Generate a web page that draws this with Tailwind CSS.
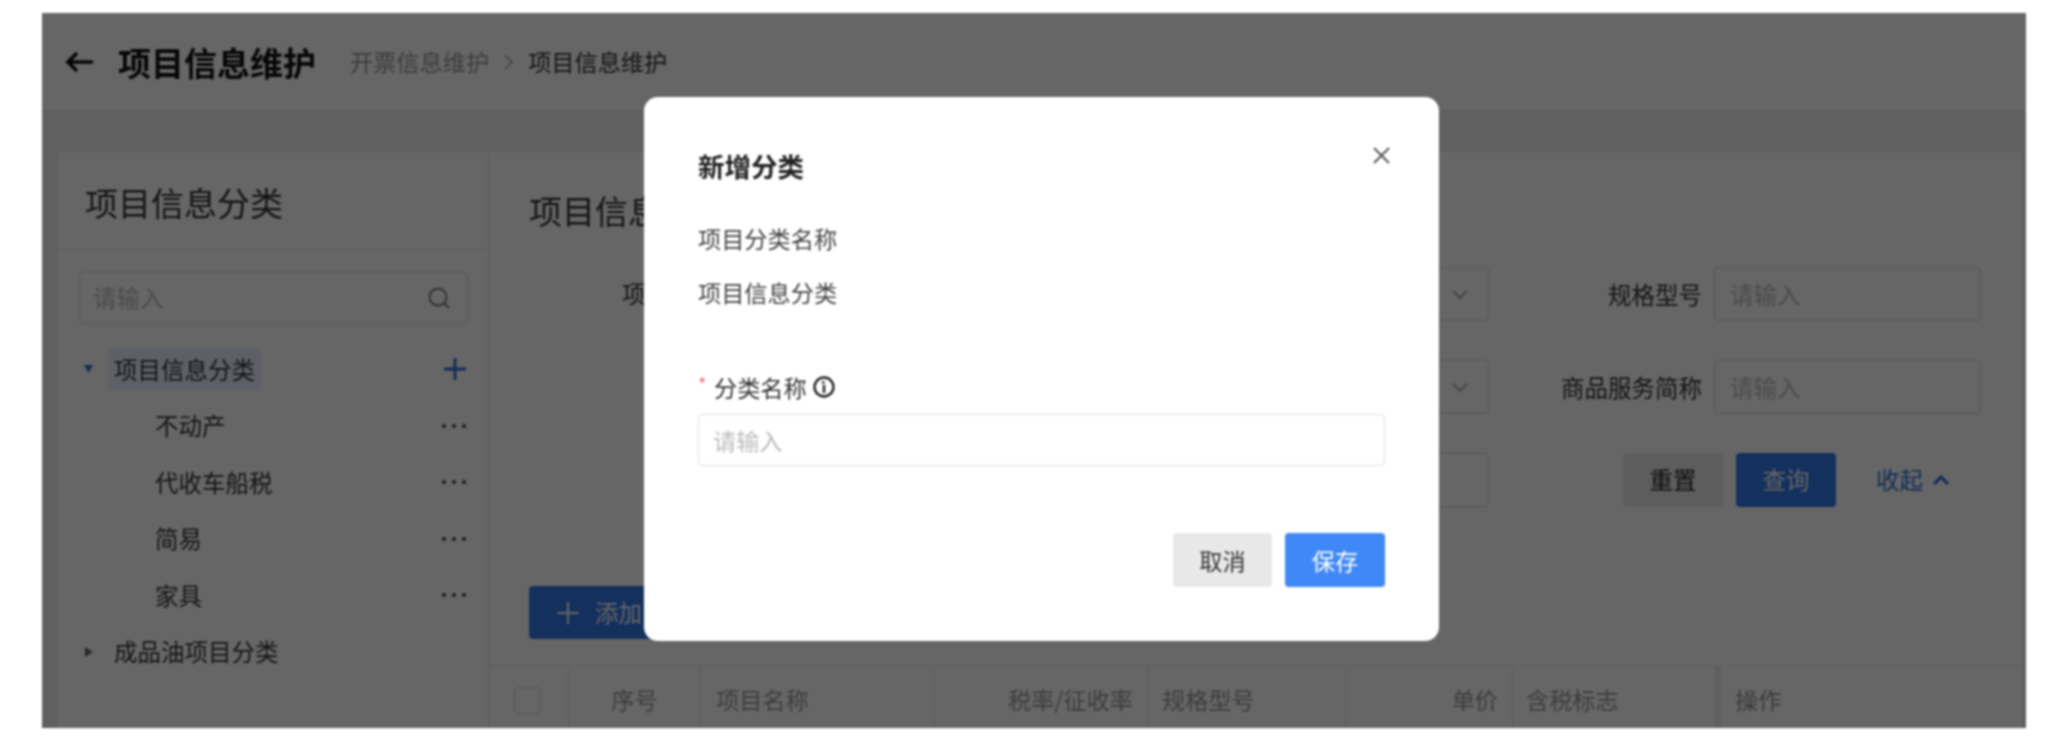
<!DOCTYPE html>
<html lang="zh-CN">

<head>
    <meta charset="UTF-8">
    <title>项目信息维护</title>
    <script src="https://cdn.jsdelivr.net/npm/@tailwindcss/browser@4"></script>
</head>

<body class="bg-white h-[745px] overflow-hidden font-['Noto_Sans_CJK_SC','Liberation_Sans',sans-serif]">

    <div class="relative ml-[42px] mt-[13px] w-[1984px] h-[715px] overflow-hidden bg-[#f0f0f0] flex flex-col blur-[0.8px]">

        <!-- page header -->
        <div class="h-[97px] flex-none bg-white flex items-center pl-[23px]">
            <svg class="w-[28px] h-[24px] text-[#111]" viewBox="0 0 28 24" fill="none" stroke="currentColor" stroke-width="3.6">
                <path d="M28 12H3M12 3l-9 9 9 9" />
            </svg>
            <span class="ml-[25px] text-[33px] leading-[46px] font-bold text-[#111]">项目信息维护</span>
            <span class="ml-[34px] text-[23.2px] text-[#999]">开票信息维护</span>
            <svg class="mx-[15px] w-[9px] h-[16px] text-[#999]" viewBox="0 0 9 16" fill="none" stroke="currentColor" stroke-width="1.3">
                <path d="M1 1l7 7-7 7" />
            </svg>
            <span class="text-[23.2px] text-[#333]">项目信息维护</span>
        </div>

        <!-- content -->
        <div class="flex-1 flex gap-[2px] pt-[42px] pl-[16px] pr-[4px] min-h-0">

            <!-- category tree -->
            <div class="w-[430px] flex-none bg-white">
                <div class="h-[98px] pl-[27px] pt-[27px] border-b border-[#f0f0f0] text-[33px] leading-[46px] text-[#333]">项目信息分类</div>
                <div class="mt-[22px] ml-[21px] w-[389px] h-[52px] border border-[#ddd] rounded-[4px] flex items-center pl-[13px] pr-[16px]">
                    <input class="flex-1 min-w-0 text-[23.5px] outline-none placeholder:text-[#bbb]" placeholder="请输入">
                    <svg class="w-[24px] h-[24px] text-[#777]" viewBox="0 0 24 24" fill="none" stroke="currentColor" stroke-width="1.8">
                        <circle cx="11" cy="11" r="8.5" />
                        <path d="M17 17l5 5" />
                    </svg>
                </div>
                <div class="mt-[17px] text-[23.5px] text-[#333]">
                    <div class="h-[56.5px] flex items-center pl-[26px] pr-[22px]">
                        <svg class="w-[9px] h-[8px] text-[#2f6fdc]" viewBox="0 0 9 8" fill="currentColor"><path d="M0 0h9L4.5 8z" /></svg>
                        <span class="ml-[15px] h-[42px] px-[6px] flex items-center rounded-[4px] bg-[#e9f1fe]">项目信息分类</span>
                        <svg class="ml-auto w-[22px] h-[22px] text-[#2f6fdc]" viewBox="0 0 22 22" fill="none" stroke="currentColor" stroke-width="2.8">
                            <path d="M11 0v22M0 11h22" />
                        </svg>
                    </div>
                    <div class="h-[56.5px] flex items-center pl-[97px] pr-[22px]">不动产<span class="ml-auto flex gap-[6px]"><i class="w-[4px] h-[4px] rounded-full bg-[#444]"></i><i class="w-[4px] h-[4px] rounded-full bg-[#444]"></i><i class="w-[4px] h-[4px] rounded-full bg-[#444]"></i></span></div>
                    <div class="h-[56.5px] flex items-center pl-[97px] pr-[22px]">代收车船税<span class="ml-auto flex gap-[6px]"><i class="w-[4px] h-[4px] rounded-full bg-[#444]"></i><i class="w-[4px] h-[4px] rounded-full bg-[#444]"></i><i class="w-[4px] h-[4px] rounded-full bg-[#444]"></i></span></div>
                    <div class="h-[56.5px] flex items-center pl-[97px] pr-[22px]">简易<span class="ml-auto flex gap-[6px]"><i class="w-[4px] h-[4px] rounded-full bg-[#444]"></i><i class="w-[4px] h-[4px] rounded-full bg-[#444]"></i><i class="w-[4px] h-[4px] rounded-full bg-[#444]"></i></span></div>
                    <div class="h-[56.5px] flex items-center pl-[97px] pr-[22px]">家具<span class="ml-auto flex gap-[6px]"><i class="w-[4px] h-[4px] rounded-full bg-[#444]"></i><i class="w-[4px] h-[4px] rounded-full bg-[#444]"></i><i class="w-[4px] h-[4px] rounded-full bg-[#444]"></i></span></div>
                    <div class="h-[56.5px] flex items-center pl-[27px] pr-[22px]">
                        <svg class="w-[8px] h-[10px] text-[#666]" viewBox="0 0 8 10" fill="currentColor"><path d="M0 0l8 5-8 5z" /></svg>
                        <span class="ml-[21px]">成品油项目分类</span>
                    </div>
                </div>
            </div>

            <!-- project info -->
            <div class="flex-1 min-w-0 bg-white flex flex-col">
                <div class="pl-[39px] pt-[35px] text-[33px] leading-[46px] text-[#333]">项目信息</div>

                <div class="mt-[34px] flex flex-col gap-[39px] text-[23.5px] text-[#333]">
                    <div class="h-[54px] flex items-center pl-[132px]">
                        <span class="flex-1">项目</span>
                        <div class="w-[200px] h-full border border-[#ddd] rounded-[4px] flex items-center justify-end pr-[20px]">
                            <svg class="w-[16px] h-[9px] text-[#888]" viewBox="0 0 16 9" fill="none" stroke="currentColor" stroke-width="1.4"><path d="M1 1l7 7 7-7" /></svg>
                        </div>
                        <span class="w-[213px] text-right pt-[1px]">规格型号</span>
                        <input class="ml-[12px] mr-[41px] w-[267px] h-full border border-[#ddd] rounded-[4px] px-[15px] outline-none placeholder:text-[#bbb]" placeholder="请输入">
                    </div>
                    <div class="h-[54px] flex items-center pl-[132px]">
                        <span class="flex-1"></span>
                        <div class="w-[200px] h-full border border-[#ddd] rounded-[4px] flex items-center justify-end pr-[20px]">
                            <svg class="w-[16px] h-[9px] text-[#888]" viewBox="0 0 16 9" fill="none" stroke="currentColor" stroke-width="1.4"><path d="M1 1l7 7 7-7" /></svg>
                        </div>
                        <span class="w-[213px] text-right pt-[1px]">商品服务简称</span>
                        <input class="ml-[12px] mr-[41px] w-[267px] h-full border border-[#ddd] rounded-[4px] px-[15px] outline-none placeholder:text-[#bbb]" placeholder="请输入">
                    </div>
                    <div class="h-[54px] flex items-center pl-[132px]">
                        <span class="flex-1"></span>
                        <div class="w-[200px] h-full border border-[#ddd] rounded-[4px]"></div>
                        <div class="w-[533px] h-full flex items-center pl-[134px]">
                            <button class="w-[100px] h-full rounded-[4px] bg-[#e8e8e8] text-[#222]">重置</button>
                            <button class="ml-[13px] w-[100px] h-full rounded-[4px] bg-[#3279e8] text-white">查询</button>
                            <span class="ml-[40px] text-[#2f6fdc]">收起</span>
                            <svg class="ml-[10px] w-[16px] h-[10px] text-[#2f6fdc]" viewBox="0 0 16 10" fill="none" stroke="currentColor" stroke-width="3"><path d="M1 9l7-7 7 7" /></svg>
                        </div>
                    </div>
                </div>

                <button class="mt-[79px] ml-[39px] w-[180px] h-[53px] flex-none rounded-[4px] bg-[#3279e8] text-white text-[23.5px] flex items-center pl-[28px]">
                    <svg class="w-[22px] h-[22px]" viewBox="0 0 22 22" fill="none" stroke="currentColor" stroke-width="2"><path d="M11 0v22M0 11h22" /></svg>
                    <span class="ml-[16px]">添加</span>
                </button>

                <!-- table head -->
                <div class="mt-[27px] flex-1 border-t border-[#ececec] flex text-[23.2px] text-[#999]">
                    <div class="w-[79px] border-r border-[#ececec] flex items-start pt-[20px] pl-[24px]"><span class="w-[27px] h-[27px] border border-[#ddd] rounded-[4px]"></span></div>
                    <div class="w-[132px] border-r border-[#ececec] flex justify-center pt-[15px]">序号</div>
                    <div class="w-[233px] border-r border-[#ececec] pt-[15px] pl-[15px]">项目名称</div>
                    <div class="w-[214px] border-r border-[#ececec] pt-[15px] text-right pr-[14px]">税率/征收率</div>
                    <div class="w-[199px] border-r border-[#ececec] pt-[15px] pl-[14px]">规格型号</div>
                    <div class="w-[166px] border-r border-[#ececec] pt-[15px] text-right pr-[14px]">单价</div>
                    <div class="w-[208px] border-r-[6px] border-[#eceef2] pt-[15px] pl-[13px]">含税标志</div>
                    <div class="flex-1 pt-[15px] pl-[14px]">操作</div>
                </div>
            </div>
        </div>

        <!-- modal mask -->
        <div class="absolute inset-0 bg-black/60"></div>

        <!-- add category dialog -->
        <div class="absolute left-[602px] top-[84px] w-[795px] h-[544px] bg-white rounded-[14px] px-[54px] pt-[51px]">
            <svg class="absolute right-[49px] top-[50px] w-[17px] h-[17px] text-[#555]" viewBox="0 0 17 17" fill="none" stroke="currentColor" stroke-width="1.9"><path d="M1 1l15 15M16 1L1 16" /></svg>
            <div class="text-[26.5px] leading-[36px] font-bold text-[#222]">新增分类</div>
            <div class="mt-[38px] text-[23.2px] leading-[32px] text-[#444]">项目分类名称</div>
            <div class="mt-[22px] text-[23.2px] leading-[32px] text-[#444]">项目信息分类</div>
            <div class="mt-[63px] h-[32px] flex items-center text-[23.2px] text-[#333]">
                <span class="w-[16px] self-start text-[18px] leading-[24px] text-[#f5697a]">*</span>
                <span>分类名称</span>
                <svg class="ml-[6px] w-[22px] h-[22px] text-[#222]" viewBox="0 0 22 22" fill="none" stroke="currentColor" stroke-width="2.4">
                    <circle cx="11" cy="11" r="9.5" />
                    <path d="M9 6.5h2.5M11 9v8" />
                </svg>
            </div>
            <input class="mt-[11px] block w-full h-[52px] border border-[#e0e0e0] rounded-[4px] px-[14px] text-[23.2px] outline-none placeholder:text-[#bbb]" placeholder="请输入">
            <div class="mt-[67px] flex justify-end gap-[13px] text-[23.2px]">
                <button class="w-[99px] h-[54px] rounded-[4px] bg-[#e8e8e8] text-[#333]">取消</button>
                <button class="w-[100px] h-[54px] rounded-[4px] bg-[#3f88f7] text-white">保存</button>
            </div>
        </div>
    </div>

</body>

</html>
